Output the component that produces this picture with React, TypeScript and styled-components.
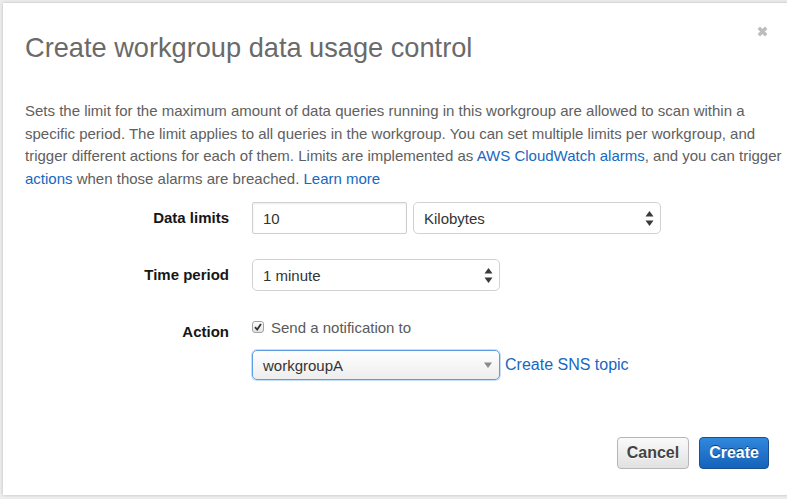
import React from "react";
import styled, { createGlobalStyle } from "styled-components";

const Global = createGlobalStyle`
  html, body { margin: 0; padding: 0; }
  body {
    background: #ededed;
    font-family: "Liberation Sans", Arial, Helvetica, sans-serif;
    overflow: hidden;
    width: 787px;
    height: 499px;
  }
`;

const Page = styled.div`
  padding: 3px 0 0 3px;
`;

const Modal = styled.div`
  width: 790px;
  height: 492px;
  background: #fff;
  box-shadow: 0 0 3px rgba(0, 0, 0, 0.22);
  padding: 0 16px 0 22px;
  box-sizing: border-box;
  display: flex;
  flex-direction: column;
`;

const Header = styled.div`
  display: flex;
  justify-content: space-between;
  align-items: flex-start;
  padding-top: 23px;
`;

const Title = styled.h1`
  margin: 7px 0 0 0;
  font-size: 27.2px;
  line-height: 30px;
  font-weight: 400;
  color: #6a6a6a;
`;

const Close = styled.button`
  border: 0;
  background: none;
  padding: 0;
  margin-right: 9px;
  width: 11px;
  height: 11px;
  display: flex;
  cursor: pointer;
`;

const Intro = styled.p`
  margin: 37px 0 0 0;
  font-size: 15px;
  line-height: 22.5px;
  color: #606060;
  white-space: nowrap;
`;

const Link = styled.a<{ $size?: number }>`
  color: #1668c1;
  text-decoration: none;
  font-size: ${(p) => (p.$size ? `${p.$size}px` : "inherit")};
`;

const Form = styled.div`
  margin-top: 12px;
  display: flex;
  flex-direction: column;
  gap: 25px;
`;

const Row = styled.div<{ $top?: number }>`
  display: grid;
  grid-template-columns: 204px 1fr;
  column-gap: 23px;
  align-items: ${(p) => (p.$top !== undefined ? "start" : "center")};
  padding-top: ${(p) => (p.$top ?? 0)}px;
`;

const Label = styled.div<{ $offset?: number }>`
  text-align: right;
  font-size: 15px;
  line-height: 20px;
  font-weight: 700;
  color: #161616;
  padding-top: ${(p) => p.$offset ?? 0}px;
`;

const Controls = styled.div<{ $gap?: number }>`
  display: flex;
  align-items: center;
  gap: ${(p) => p.$gap ?? 6}px;
`;

const Stack = styled.div`
  display: flex;
  flex-direction: column;
  gap: 13px;
`;

const TextInput = styled.input`
  box-sizing: border-box;
  width: 155px;
  height: 32px;
  border: 1px solid #cfcfcf;
  border-radius: 2px;
  box-shadow: inset 0 1px 2px rgba(0, 0, 0, 0.08);
  padding: 0 10px;
  font: inherit;
  font-size: 15px;
  color: #333;
  outline: none;
`;

const SelectBox = styled.div<{ $focused?: boolean; $h?: number }>`
  box-sizing: border-box;
  width: 248px;
  height: ${(p) => p.$h ?? 32}px;
  display: flex;
  align-items: center;
  justify-content: space-between;
  padding: 0 6px 0 10px;
  border-radius: 5px;
  font-size: 15px;
  color: #333;
  border: 1px solid ${(p) => (p.$focused ? "#5d9de6" : "#d2d2d2")};
  background: ${(p) =>
    p.$focused ? "linear-gradient(#ffffff, #ededed)" : "#fff"};
  box-shadow: ${(p) =>
    p.$focused ? "0 0 0 1px rgba(93, 157, 230, 0.35)" : "none"};
`;

const Check = styled.label`
  display: flex;
  align-items: center;
  gap: 7px;
  height: 20px;
  font-size: 15px;
  color: #5a5a5a;
`;

const CheckBox = styled.span`
  box-sizing: border-box;
  width: 12px;
  height: 12px;
  border: 1px solid #a3a3a3;
  border-radius: 3px;
  background: linear-gradient(#fdfdfd, #e3e3e3);
  display: flex;
  align-items: center;
  justify-content: center;
`;

const Footer = styled.div`
  margin-top: 57px;
  display: flex;
  justify-content: flex-end;
  gap: 10px;
  padding-right: 8px;
`;

const Button = styled.button<{ $primary?: boolean }>`
  height: 32px;
  padding: 0 9px;
  border-radius: 4px;
  font: inherit;
  font-size: 16px;
  font-weight: 700;
  cursor: pointer;
  color: ${(p) => (p.$primary ? "#fff" : "#444")};
  border: 1px solid ${(p) => (p.$primary ? "#1b4f8e" : "#b5b5b5")};
  background: ${(p) =>
    p.$primary
      ? "linear-gradient(#3088dc, #1462bb)"
      : "linear-gradient(#fafafa, #e1e1e1)"};
  text-shadow: ${(p) => (p.$primary ? "0 -1px 0 #0d3f7a" : "0 1px 0 #fff")};
`;

const UpDown = () => (
  <svg width="9" height="17" viewBox="0 0 9 17">
    <path d="M4.5 1 L8.5 6.5 L0.5 6.5 Z" fill="#3a3a3a" />
    <path d="M4.5 16 L8.5 10.5 L0.5 10.5 Z" fill="#3a3a3a" />
  </svg>
);

const Down = () => (
  <svg width="10" height="8" viewBox="0 0 10 8">
    <path d="M1 1.5 L9 1.5 L5 7 Z" fill="#8a8a8a" />
  </svg>
);

export default function App() {
  return (
    <>
      <Global />
      <Page>
        <Modal>
          <Header>
            <Title>Create workgroup data usage control</Title>
            <Close aria-label="Close">
              <svg width="11" height="11" viewBox="0 0 11 11">
                <path
                  d="M1.8 1.8 L9.2 9.2 M9.2 1.8 L1.8 9.2"
                  stroke="#bdbdbd"
                  strokeWidth="3.4"
                />
              </svg>
            </Close>
          </Header>
          <Intro>
            Sets the limit for the maximum amount of data queries running in
            this workgroup are allowed to scan within a
            <br />
            specific period. The limit applies to all queries in the workgroup.
            You can set multiple limits per workgroup, and
            <br />
            trigger different actions for each of them. Limits are implemented
            as <Link href="#">AWS CloudWatch alarms</Link>, and you can trigger
            <br />
            <Link href="#">actions</Link> when those alarms are breached.{" "}
            <Link href="#">Learn more</Link>
          </Intro>
          <Form>
            <Row>
              <Label>Data limits</Label>
              <Controls>
                <TextInput defaultValue="10" />
                <SelectBox>
                  <span>Kilobytes</span>
                  <UpDown />
                </SelectBox>
              </Controls>
            </Row>
            <Row>
              <Label>Time period</Label>
              <Controls>
                <SelectBox>
                  <span>1 minute</span>
                  <UpDown />
                </SelectBox>
              </Controls>
            </Row>
            <Row $top={1}>
              <Label $offset={5}>Action</Label>
              <Stack>
                <Check>
                  <CheckBox>
                    <svg width="8" height="8" viewBox="0 0 8 8">
                      <path
                        d="M1 4.2 L3.2 6.5 L7 1"
                        stroke="#333"
                        strokeWidth="1.8"
                        fill="none"
                      />
                    </svg>
                  </CheckBox>
                  Send a notification to
                </Check>
                <Controls $gap={5}>
                  <SelectBox $focused $h={30}>
                    <span>workgroupA</span>
                    <Down />
                  </SelectBox>
                  <Link href="#" $size={16}>
                    Create SNS topic
                  </Link>
                </Controls>
              </Stack>
            </Row>
          </Form>
          <Footer>
            <Button>Cancel</Button>
            <Button $primary>Create</Button>
          </Footer>
        </Modal>
      </Page>
    </>
  );
}
